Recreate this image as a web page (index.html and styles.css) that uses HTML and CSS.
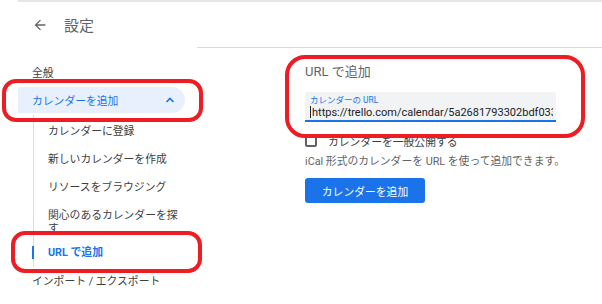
FILE: index.html
```html
<!DOCTYPE html>
<html lang="ja">
<head>
<meta charset="utf-8">
<link rel="stylesheet" href="styles.css">
</head>
<body>
<div class="topline"></div>
<header class="header">
  <svg class="back" width="16" height="16" viewBox="0 0 24 24"><path d="M20 11H7.83l5.59-5.59L12 4l-8 8 8 8 1.41-1.41L7.83 13H20v-2z" fill="#5f6368"/></svg>
  <span class="title">設定</span>
</header>
<div class="main">
  <nav class="sidebar">
    <div class="nav-item">全般</div>
    <div class="nav-item active-group">
      <span>カレンダーを追加</span>
      <svg class="chev" width="10" height="6" viewBox="0 0 10 6"><polyline points="1.5,5 5,1.5 8.5,5" fill="none" stroke="#1a73e8" stroke-width="1.6"/></svg>
    </div>
    <div class="sublist">
      <div class="sub-item">カレンダーに登録</div>
      <div class="sub-item">新しいカレンダーを作成</div>
      <div class="sub-item">リソースをブラウジング</div>
      <div class="sub-item wrap">関心のあるカレンダーを探す</div>
      <div class="sub-item current">URL で追加</div>
    </div>
    <div class="nav-item">インポート / エクスポート</div>
  </nav>
  <section class="content">
    <h2 class="section-title">URL で追加</h2>
    <div class="field">
      <div class="field-label">カレンダーの URL</div>
      <div class="field-value"><span class="caret"></span>https://trello.com/calendar/5a2681793302bdf0334b2c1d</div>
    </div>
    <label class="check-row"><span class="checkbox"></span><span>カレンダーを一般公開する</span></label>
    <p class="hint">iCal 形式のカレンダーを URL を使って追加できます。</p>
    <button class="btn">カレンダーを追加</button>
  </section>
</div>
<div class="mark mark-a"></div>
<div class="mark mark-b"></div>
<div class="mark mark-c"></div>
</body>
</html>
```
FILE: styles.css
```css
* { box-sizing: border-box; }
html, body { margin: 0; padding: 0; }
body {
  width: 602px;
  height: 304px;
  overflow: hidden;
  position: relative;
  background: #fff;
  font-family: Roboto, "Noto Sans CJK JP", sans-serif;
  color: #3c4043;
}
.topline {
  height: 2px;
  margin-left: 18px;
  background: #e6e6e6;
}
.header {
  height: 45px;
  display: flex;
  align-items: center;
  padding-left: 32px;
}
.back { display: block; }
.title {
  margin-left: 16px;
  font-size: 15px;
  color: #5f6368;
}
.main {
  display: grid;
  grid-template-columns: 197px 1fr;
}
.sidebar {
  padding-top: 12px;
  padding-left: 18px;
  width: 185px;
}
.nav-item {
  height: 26px;
  display: flex;
  align-items: center;
  padding-left: 14px;
  font-size: 10.8px;
  color: #3c4043;
}
.active-group {
  margin: 2px 0;
  background: #e8f0fe;
  color: #1a73e8;
  border-radius: 0 13px 13px 0;
  justify-content: space-between;
  padding-right: 10px;
}
.chev { display: block; }
.sublist {
  margin-left: 15px;
  border-left: 1px solid #dadce0;
  padding-top: 2px;
}
.sub-item {
  position: relative;
  padding: 7.5px 4px 7.5px 14px;
  line-height: 13px;
  font-size: 10.8px;
  color: #3c4043;
}
.sub-item.wrap { padding-bottom: 4px; }
.sub-item.current {
  color: #1a73e8;
  font-weight: 700;
}
.sub-item.current::before {
  content: "";
  position: absolute;
  left: -2px;
  top: 7px;
  width: 2px;
  height: 13px;
  background: #1a73e8;
}
.content {
  border-top: 1px solid #dadce0;
  padding: 15px 0 0 108px;
}
.section-title {
  margin: 0;
  font-size: 13px;
  line-height: 18px;
  font-weight: 400;
  color: #5f6368;
}
.field {
  margin-top: 11px;
  width: 251px;
  height: 30px;
  background: #f1f3f4;
  border-bottom: 2px solid #1a73e8;
  border-radius: 3px 3px 0 0;
  padding: 3px 3px 0 5px;
  overflow: hidden;
}
.field-label {
  font-size: 8.5px;
  line-height: 11px;
  color: #1a73e8;
}
.field-value {
  font-size: 11px;
  line-height: 14px;
  color: #202124;
  white-space: nowrap;
  overflow: hidden;
}
.caret {
  display: inline-block;
  width: 1px;
  height: 12px;
  background: #202124;
  vertical-align: -2px;
  margin-right: 1px;
}
.check-row {
  margin-top: 12px;
  display: flex;
  align-items: center;
  height: 14px;
  font-size: 10.8px;
  color: #3c4043;
}
.checkbox {
  width: 12px;
  height: 12px;
  border: 2px solid #5f6368;
  border-radius: 2px;
  margin-right: 11px;
}
.hint {
  margin: 7px 0 0;
  font-size: 10.8px;
  line-height: 14px;
  color: #5f6368;
}
.btn {
  margin-top: 9px;
  width: 120px;
  height: 25px;
  border: 0;
  border-radius: 3px;
  background: #1a73e8;
  color: #fff;
  font-family: inherit;
  font-size: 10.8px;
  padding: 0;
}
.mark {
  position: absolute;
  border: 4.5px solid #ee1d23;
}
.mark-a { left: 2px; top: 79px; width: 201px; height: 43px; border-radius: 14px; }
.mark-b { left: 11px; top: 231px; width: 191px; height: 42px; border-radius: 14px; }
.mark-c { left: 285px; top: 55px; width: 300px; height: 83px; border-radius: 20px; }
```
